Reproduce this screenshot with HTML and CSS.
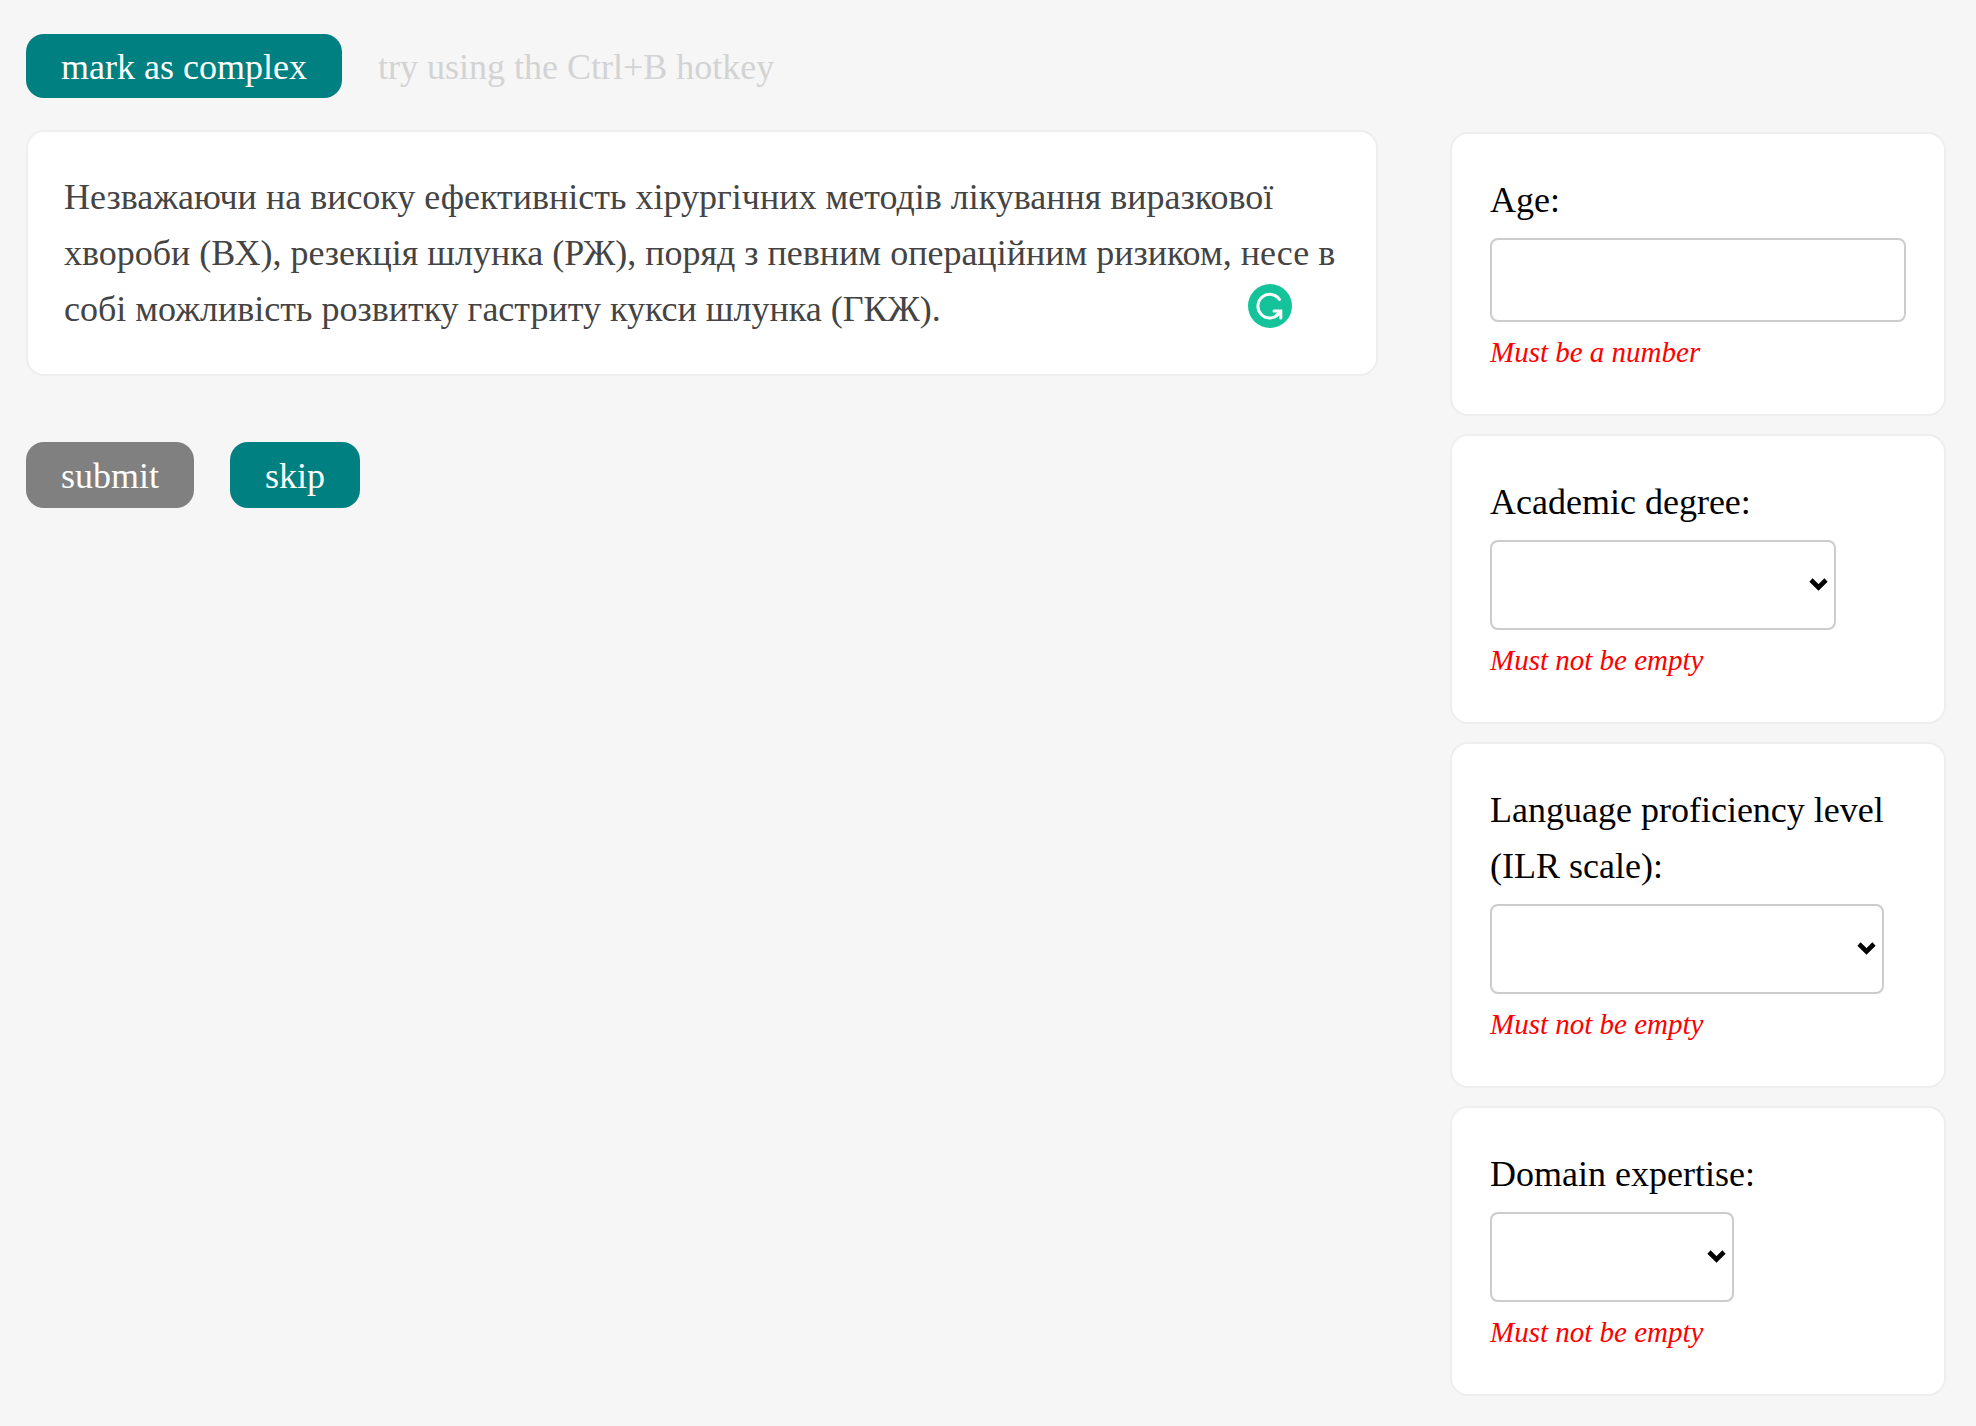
FILE: index.html
```html
<!DOCTYPE html>
<html lang="en">
<head>
  <meta charset="utf-8">
  <meta name="viewport" content="width=device-width, initial-scale=1">
  <title>Complex word annotation</title>
  <link rel="stylesheet" href="styles.css">
</head>
<body>
  <header class="toolbar">
    <button class="button" type="button">mark as complex</button>
    <span class="hint">try using the Ctrl+B hotkey</span>
  </header>
  <div class="layout">
    <main>
      <div class="card passage">
        <p class="passage-text" lang="uk">Незважаючи на високу ефективність хірургічних методів лікування виразкової хвороби (ВХ), резекція шлунка (РЖ), поряд з певним операційним ризиком, несе в собі можливість розвитку гастриту кукси шлунка (ГКЖ).</p>
        <svg class="checker" viewBox="0 0 44 44" aria-hidden="true">
          <circle cx="22" cy="22" r="22" fill="#15c39a"/>
          <g fill="none" stroke="#fff" stroke-width="3" stroke-linecap="round" stroke-linejoin="miter">
            <path d="M31.500 15.500A11.800 11.800 0 1 0 30.500 30"/>
            <path d="M26 27H32.800V34M32 27.500L29 31"/>
          </g>
        </svg>
      </div>
      <div class="actions">
        <button class="button button-muted" type="button">submit</button>
        <button class="button" type="button">skip</button>
      </div>
    </main>
    <form class="profile">
      <div class="card field">
        <label for="age">Age:</label>
        <input class="control" id="age" type="text" inputmode="numeric">
        <p class="error">Must be a number</p>
      </div>
      <div class="card field">
        <label for="degree">Academic degree:</label>
        <div class="select select-degree">
          <select class="control" id="degree"><option></option></select>
          <svg class="chevron" viewBox="0 0 19 13" aria-hidden="true"><path d="M2 2L9.500 9.500L17 2" fill="none" stroke="#000" stroke-width="4.600"/></svg>
        </div>
        <p class="error">Must not be empty</p>
      </div>
      <div class="card field">
        <label for="level">Language proficiency level (ILR scale):</label>
        <div class="select select-level">
          <select class="control" id="level"><option></option></select>
          <svg class="chevron" viewBox="0 0 19 13" aria-hidden="true"><path d="M2 2L9.500 9.500L17 2" fill="none" stroke="#000" stroke-width="4.600"/></svg>
        </div>
        <p class="error">Must not be empty</p>
      </div>
      <div class="card field">
        <label for="domain">Domain expertise:</label>
        <div class="select select-domain">
          <select class="control" id="domain"><option></option></select>
          <svg class="chevron" viewBox="0 0 19 13" aria-hidden="true"><path d="M2 2L9.500 9.500L17 2" fill="none" stroke="#000" stroke-width="4.600"/></svg>
        </div>
        <p class="error">Must not be empty</p>
      </div>
    </form>
  </div>
</body>
</html>
```

FILE: styles.css
```css
* {
  box-sizing: border-box;
}

body {
  margin: 0;
  padding: 34px 30px 30px 26px;
  background: #f6f6f6;
  color: #000;
  font: 36px/56px "Liberation Serif", "Times New Roman", serif;
}

p {
  margin: 0;
}

.toolbar,
.actions {
  display: flex;
  flex-wrap: wrap;
  align-items: center;
  gap: 36px;
}

.button {
  padding: 5px 35px 3px;
  border: 0;
  border-radius: 18px;
  background: #008080;
  color: #fff;
  font: inherit;
}

.button-muted {
  background: #808080;
}

.hint {
  padding-top: 2px;
  color: #d3d3d3;
}

.layout {
  display: grid;
  grid-template-columns: minmax(0, 1fr) 496px;
  align-items: start;
  gap: 72px;
  margin-top: 32px;
}

.card {
  border: 2px solid #eee;
  border-radius: 18px;
  background: #fff;
}

.passage {
  position: relative;
  padding: 37px 36px;
}

.passage-text {
  color: #444;
}

.checker {
  position: absolute;
  right: 84px;
  bottom: 46px;
  width: 44px;
  height: 44px;
}

.actions {
  margin-top: 66px;
}

.actions .button {
  padding-block: 6px 4px;
}

.profile {
  display: grid;
  gap: 18px;
  padding-top: 2px;
}

.field {
  padding: 38px 38px 39px;
}

.field label {
  display: block;
  margin-bottom: 10px;
}

.control {
  display: block;
  width: 100%;
  height: 84px;
  margin: 0;
  padding: 0 16px;
  border: 2px solid #ccc;
  border-radius: 8px;
  background: #fff;
  color: inherit;
  font: inherit;
  appearance: none;
}

.select {
  position: relative;
  max-width: 100%;
}

.select .control {
  height: 90px;
}

.select-degree {
  width: 346px;
}

.select-level {
  width: 394px;
}

.select-domain {
  width: 244px;
}

.chevron {
  position: absolute;
  top: 38px;
  right: 8px;
  width: 19px;
  height: 13px;
  pointer-events: none;
}

.error {
  margin-top: 8px;
  color: #f00;
  font-size: 29px;
  font-style: italic;
  line-height: 45px;
}
```
